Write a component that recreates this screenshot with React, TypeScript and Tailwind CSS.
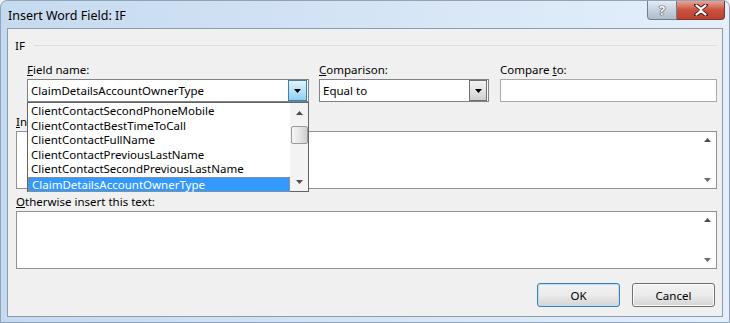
import { ChevronDown } from "lucide-react";

const items = [
  "ClientContactSecondPhoneMobile",
  "ClientContactBestTimeToCall",
  "ClientContactFullName",
  "ClientContactPreviousLastName",
  "ClientContactSecondPreviousLastName",
  "ClaimDetailsAccountOwnerType",
];

const UpArrow = () => (
  <svg width="7" height="4" viewBox="0 0 7 4">
    <path d="M0 4 L3.5 0 L7 4 Z" fill="#4d4d4d" />
  </svg>
);

const DownArrow = ({ color = "#4d4d4d" }: { color?: string }) => (
  <svg width="7" height="4" viewBox="0 0 7 4">
    <path d="M0 0 L7 0 L3.5 4 Z" fill={color} />
  </svg>
);

const TextArea = ({ height }: { height: string }) => (
  <div className={`${height} mr-[5px] flex border border-[#8e9196] bg-white`}>
    <div className="flex-1" />
    <div className="flex w-[17px] flex-col items-center justify-between py-[6px]">
      <UpArrow />
      <DownArrow color="#6a6a6a" />
    </div>
  </div>
);

const App = () => {
  return (
    <div className="h-[323px] w-[730px] overflow-hidden bg-[#f0f0f0] font-['Noto_Sans',sans-serif] text-[11.5px] leading-[15px] text-black">
      <div className="flex h-full flex-col rounded-t-[7px] border border-[#8fa3bb] bg-gradient-to-r from-[#c6daef] via-[#d5e4f5] to-[#e4effa]">
        {/* title bar */}
        <div className="flex h-[27px] justify-between">
          <div className="flex items-center pl-[7px] pt-[1px] text-[12.5px]">Insert Word Field: IF</div>
          <div className="mr-[4px] flex h-[19px] self-start">
            <div className="flex w-[30px] items-center justify-center rounded-bl-[4px] border border-t-0 border-[#6d7e92] bg-gradient-to-b from-[#e4ebf3] via-[#c6d2de] to-[#aebccb]">
              <span
                className="text-[13px] font-bold leading-none text-white"
                style={{ textShadow: "0 0 1px #333, 0 0 1px #333, 0 0 1px #333" }}
              >
                ?
              </span>
            </div>
            <div className="flex w-[48px] items-center justify-center rounded-br-[4px] border border-l-0 border-t-0 border-[#6d3b35] bg-gradient-to-b from-[#e8a598] via-[#c9503e] to-[#c0412e]">
              <svg width="16" height="12" viewBox="0 0 16 12">
                <path
                  d="M3 1 L8 5 L13 1 M3 11 L8 7 L13 11"
                  stroke="#4a1a14"
                  strokeWidth="4"
                  strokeLinecap="round"
                  fill="none"
                />
                <path
                  d="M3.5 1.5 L8 5.2 L12.5 1.5 M3.5 10.5 L8 6.8 L12.5 10.5 M8 5.2 L8 6.8"
                  stroke="white"
                  strokeWidth="2.2"
                  strokeLinecap="round"
                  fill="none"
                />
              </svg>
            </div>
          </div>
        </div>

        {/* client area */}
        <div className="mx-[6px] flex h-[289px] flex-col border border-[#8d9bae] bg-[#f0f0f0] pl-[8px] pt-[9px]">
          <div className="flex items-center">
            <span className="-ml-px">IF</span>
            <div className="ml-[9px] mr-[5px] h-px flex-1 bg-[#d5dfe5]" />
          </div>

          <div className="mt-[9px] flex pl-[11px]">
            <div className="w-[282px]">
              <div className="mb-[2px] h-[15px]">
                <span className="underline">F</span>ield name:
              </div>
              <div className="relative">
                <div className="flex h-[23px] items-center border border-[#7f8388] bg-white">
                  <span className="flex-1 pl-[3px]">ClaimDetailsAccountOwnerType</span>
                  <div className="mr-px flex h-[21px] w-[19px] items-center justify-center border border-[#3c7fb1] bg-gradient-to-b from-[#e5f4fc] via-[#b9e3f8] to-[#8dd1f2]">
                    <DownArrow color="#000" />
                  </div>
                </div>
                <div className="absolute left-0 top-[23px] z-10 flex h-[90px] w-[282px] border border-[#646464] bg-white">
                  <div className="flex-1 pt-px">
                    {items.map((item, i) => (
                      <div
                        key={item}
                        className={`h-[14.6px] pl-[3px] leading-[14.6px] ${
                          i === items.length - 1
                            ? "border border-dotted border-[#c98a3e] bg-[#3399ff] pl-[2px] text-white leading-[12.6px]"
                            : ""
                        }`}
                      >
                        {item}
                      </div>
                    ))}
                  </div>
                  <div className="flex w-[18px] flex-col items-center bg-[#f3f3f3]">
                    <div className="flex h-[20px] items-center">
                      <UpArrow />
                    </div>
                    <div className="mt-[3px] h-[18px] w-[17px] rounded-[2px] border border-[#9a9a9a] bg-gradient-to-r from-[#f4f4f4] via-[#e6e6e6] to-[#cfcfcf]" />
                    <div className="flex-1" />
                    <div className="flex h-[18px] items-center">
                      <DownArrow />
                    </div>
                  </div>
                </div>
              </div>
            </div>

            <div className="ml-[10px] w-[170px]">
              <div className="mb-[2px] h-[15px]">
                <span className="underline">C</span>omparison:
              </div>
              <div className="flex h-[23px] items-center border border-[#7f8388] bg-white">
                <span className="flex-1 pl-[3px]">Equal to</span>
                <div className="mr-px flex h-[21px] w-[18px] items-center justify-center border border-[#707070] bg-gradient-to-b from-[#f2f2f2] via-[#e4e4e4] to-[#cfcfcf]">
                  <DownArrow color="#000" />
                </div>
              </div>
            </div>

            <div className="ml-[11px] w-[217px]">
              <div className="mb-[2px] h-[15px]">
                Compare <span className="underline">t</span>o:
              </div>
              <div className="h-[23px] border border-[#a6a9ae] bg-white" />
            </div>
          </div>

          <div className="mb-[2px] mt-[12px] h-[15px]">
            <span className="underline">I</span>nsert this text:
          </div>
          <TextArea height="h-[58px]" />

          <div className="mb-[2px] mt-[5px] h-[15px]">
            <span className="underline">O</span>therwise insert this text:
          </div>
          <TextArea height="h-[58px]" />

          <div className="mr-[7px] mt-[14px] flex justify-end gap-[12px]">
            <button className="flex h-[24px] w-[83px] items-center justify-center rounded-[3px] border border-[#3c7fb1] bg-gradient-to-b from-[#f2f2f2] via-[#ebebeb] to-[#d4d4d4] shadow-[inset_0_0_0_1px_#b8e0f5]">
              OK
            </button>
            <button className="flex h-[24px] w-[83px] items-center justify-center rounded-[3px] border border-[#707070] bg-gradient-to-b from-[#f2f2f2] via-[#ebebeb] to-[#d4d4d4] shadow-[inset_0_0_0_1px_#fcfcfc]">
              Cancel
            </button>
          </div>
        </div>
      </div>
    </div>
  );
};

export default App;
